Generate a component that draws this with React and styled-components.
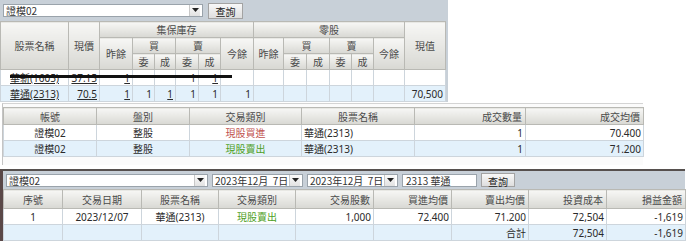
import styled, { createGlobalStyle } from "styled-components"

const GlobalStyle = createGlobalStyle`
  body {
    margin: 0;
    background: #fff;
    font-family: "Noto Sans", "Noto Sans CJK TC", sans-serif;
    font-size: 10px;
    color: #333;
  }
`;

const Page = styled.div`
  display: flex;
  flex-direction: column;
  width: 690px;
`;

const TopPanel = styled.div`
  width: 448px;
  background: #c8d0d8;
`;

const Toolbar = styled.div`
  display: flex;
  align-items: center;
  gap: ${(p) => p.$gap || 4}px;
  height: ${(p) => p.$h || 21}px;
  padding: 0 3px;
  box-sizing: border-box;
  background: #c8d0d8;
`;

const Select = styled.div`
  display: flex;
  align-items: center;
  width: ${(p) => p.$w}px;
  height: ${(p) => p.$h || 13}px;
  box-sizing: border-box;
  border: 1px solid #9aa3ab;
  background: #fff;
  font-family: "Noto Sans CJK TC", sans-serif;
  font-size: 10px;
  color: #333;
`;

const SelectText = styled.span`
  flex: 1;
  padding-left: 2px;
  white-space: nowrap;
  overflow: hidden;
`;

const Arrow = styled.span`
  display: flex;
  align-items: center;
  justify-content: center;
  width: 11px;
  height: 100%;
  margin-right: 2px;
  border-left: 1px solid #c8c8c8;
  background: linear-gradient(#fafafa, #e2e2e2);
  box-sizing: border-box;
`;

const Input = styled.div`
  width: ${(p) => p.$w}px;
  height: 13px;
  box-sizing: border-box;
  border: 1px solid #9aa3ab;
  background: #fff;
  padding-left: 3px;
  font-family: "Noto Sans CJK TC", sans-serif;
  font-size: 10px;
  line-height: 11px;
  color: #333;
`;

const Button = styled.button`
  width: ${(p) => p.$w || 35}px;
  height: ${(p) => p.$h || 16}px;
  padding: 0;
  border: 1px solid #a3a3a3;
  background: linear-gradient(#f8f8f8, #dedede);
  font-family: "Noto Sans CJK TC", sans-serif;
  font-size: 10px;
  color: #222;
`;

const TableWrap = styled.div`
  position: relative;
`;

const Grid = styled.table`
  border-collapse: collapse;
  table-layout: fixed;
  width: ${(p) => p.$w}px;
`;

const Head = styled.th`
  height: ${(p) => p.$h || 15}px;
  padding: 0 3px;
  border: 1px solid #b9b9b4;
  background: linear-gradient(#f7f7f5, #d8d8d3);
  font-family: "Noto Sans CJK TC", sans-serif;
  font-weight: normal;
  font-size: 10px;
  color: #4a4a4a;
  text-align: ${(p) => p.$align || "center"};
  white-space: nowrap;
  overflow: hidden;
`;

const Row = styled.tr`
  background: ${(p) => (p.$alt ? "#e3f1fb" : "#fff")};
`;

const Cell = styled.td`
  height: ${(p) => p.$h || 14}px;
  padding: 0 2px;
  border: 1px solid #cdd5dc;
  font-size: 10px;
  color: ${(p) => p.$color || "#2a2a2a"};
  text-align: ${(p) => p.$align || "right"};
  white-space: nowrap;
  overflow: hidden;
`;

const Link = styled.span`
  text-decoration: underline;
`;

const Strike = styled.div`
  position: absolute;
  left: 10px;
  top: 54px;
  width: 222px;
  height: 3px;
  background: #111;
`;

const MidPanel = styled.div`
  width: 641px;
  height: 62px;
  margin: 1px 0 0 2px;
  padding-top: 3px;
  box-sizing: border-box;
  border-top: 1px solid #d4d4d4;
  border-left: 1px solid #c4c4c4;
  background: #fbfbfb;
`;

const BottomPanel = styled.div`
  width: 685px;
  margin-top: 4px;
  border-top: 2px solid #56504e;
  border-left: 3px solid #5a4848;
  box-sizing: border-box;
  background: #c8d0d8;
`;

const Caret = () => (
  <svg width="7" height="5" viewBox="0 0 7 5">
    <path d="M0 0h7L3.5 4z" fill="#222" />
  </svg>
);

const DropDown = ({ w, h, children }) => (
  <Select $w={w} $h={h}>
    <SelectText>{children}</SelectText>
    <Arrow>
      <Caret />
    </Arrow>
  </Select>
);

const topCols = [68, 31, 33, 22, 21, 23, 22, 33, 30, 23, 23, 22, 22, 31, 41];
const midCols = [93, 93, 112, 113, 111, 118];
const botCols = [59, 79, 77, 77, 78, 78, 77, 78, 79];

const Cols = ({ widths }) => (
  <colgroup>
    {widths.map((w, i) => (
      <col key={i} style={{ width: w }} />
    ))}
  </colgroup>
);

const trades = [
  { acct: "證模02", kind: "整股", type: "現股買進", color: "#c0504d", name: "華通(2313)", qty: "1", price: "70.400" },
  { acct: "證模02", kind: "整股", type: "現股賣出", color: "#4ea024", name: "華通(2313)", qty: "1", price: "71.200" },
];

const App = () => {
  return (
    <Page>
      <GlobalStyle />
      <TopPanel>
        <Toolbar $gap={5}>
          <DropDown w={200}>證模02</DropDown>
          <Button>查詢</Button>
        </Toolbar>
        <TableWrap>
          <Grid $w={445}>
            <Cols widths={topCols} />
            <thead>
              <tr>
                <Head rowSpan={3}>股票名稱</Head>
                <Head rowSpan={3}>現價</Head>
                <Head colSpan={6}>集保庫存</Head>
                <Head colSpan={6}>零股</Head>
                <Head rowSpan={3}>現值</Head>
              </tr>
              <tr>
                <Head rowSpan={2}>昨餘</Head>
                <Head colSpan={2}>買</Head>
                <Head colSpan={2}>賣</Head>
                <Head rowSpan={2}>今餘</Head>
                <Head rowSpan={2}>昨餘</Head>
                <Head colSpan={2}>買</Head>
                <Head colSpan={2}>賣</Head>
                <Head rowSpan={2}>今餘</Head>
              </tr>
              <tr>
                <Head>委</Head>
                <Head>成</Head>
                <Head>委</Head>
                <Head>成</Head>
                <Head>委</Head>
                <Head>成</Head>
                <Head>委</Head>
                <Head>成</Head>
              </tr>
            </thead>
            <tbody>
              <Row>
                <Cell $align="center"><Link>華新(1605)</Link></Cell>
                <Cell><Link>37.15</Link></Cell>
                <Cell><Link>1</Link></Cell>
                <Cell />
                <Cell />
                <Cell>1</Cell>
                <Cell><Link>1</Link></Cell>
                <Cell />
                <Cell />
                <Cell />
                <Cell />
                <Cell />
                <Cell />
                <Cell />
                <Cell />
              </Row>
              <Row $alt>
                <Cell $align="center" $h={15}><Link>華通(2313)</Link></Cell>
                <Cell><Link>70.5</Link></Cell>
                <Cell><Link>1</Link></Cell>
                <Cell>1</Cell>
                <Cell><Link>1</Link></Cell>
                <Cell>1</Cell>
                <Cell>1</Cell>
                <Cell>1</Cell>
                <Cell />
                <Cell />
                <Cell />
                <Cell />
                <Cell />
                <Cell />
                <Cell>70,500</Cell>
              </Row>
            </tbody>
          </Grid>
          <Strike />
        </TableWrap>
      </TopPanel>

      <MidPanel>
        <Grid $w={641}>
          <Cols widths={midCols} />
          <thead>
            <tr>
              <Head $h={16}>帳號</Head>
              <Head $h={16}>盤別</Head>
              <Head $h={16}>交易類別</Head>
              <Head $h={16}>股票名稱</Head>
              <Head $h={16} $align="right">成交數量</Head>
              <Head $h={16} $align="right">成交均價</Head>
            </tr>
          </thead>
          <tbody>
            {trades.map((t, i) => (
              <Row key={i} $alt={i % 2 === 1}>
                <Cell $align="center" $h={14}>{t.acct}</Cell>
                <Cell $align="center">{t.kind}</Cell>
                <Cell $align="center" $color={t.color}>{t.type}</Cell>
                <Cell $align="left">{t.name}</Cell>
                <Cell>{t.qty}</Cell>
                <Cell>{t.price}</Cell>
              </Row>
            ))}
          </tbody>
        </Grid>
      </MidPanel>

      <BottomPanel>
        <Toolbar $h={18} $gap={4}>
          <DropDown w={202} h={13}>證模02</DropDown>
          <DropDown w={91} h={13}>2023年12月&nbsp;&nbsp;7日</DropDown>
          <DropDown w={91} h={13}>2023年12月&nbsp;&nbsp;7日</DropDown>
          <Input $w={75}>2313 華通</Input>
          <Button $w={34} $h={14}>查詢</Button>
        </Toolbar>
        <Grid $w={682}>
          <Cols widths={botCols} />
          <thead>
            <tr>
              <Head $h={18}>序號</Head>
              <Head $h={18}>交易日期</Head>
              <Head $h={18}>股票名稱</Head>
              <Head $h={18}>交易類別</Head>
              <Head $h={18} $align="right">交易股數</Head>
              <Head $h={18} $align="right">買進均價</Head>
              <Head $h={18} $align="right">賣出均價</Head>
              <Head $h={18} $align="right">投資成本</Head>
              <Head $h={18} $align="right">損益金額</Head>
            </tr>
          </thead>
          <tbody>
            <Row>
              <Cell $align="center" $h={15}>1</Cell>
              <Cell $align="center">2023/12/07</Cell>
              <Cell $align="center">華通(2313)</Cell>
              <Cell $align="center" $color="#4ea024">現股賣出</Cell>
              <Cell>1,000</Cell>
              <Cell>72.400</Cell>
              <Cell>71.200</Cell>
              <Cell>72,504</Cell>
              <Cell>-1,619</Cell>
            </Row>
            <Row $alt>
              <Cell $h={15} />
              <Cell />
              <Cell />
              <Cell />
              <Cell />
              <Cell />
              <Cell>合計</Cell>
              <Cell>72,504</Cell>
              <Cell>-1,619</Cell>
            </Row>
          </tbody>
        </Grid>
      </BottomPanel>
    </Page>
  );
};

export default App;
